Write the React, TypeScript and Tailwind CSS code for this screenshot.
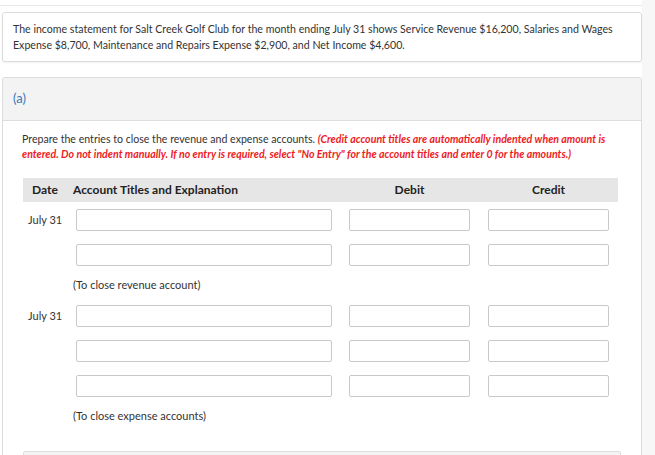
import React from "react";

const font = { fontFamily: "Lato, 'Open Sans', sans-serif" };

function Box({ w }: { w: string }) {
  return <div className={`${w} h-[22px] border border-[#c9c9c9] rounded-[2px] bg-white`} />;
}

function Row({ date }: { date?: string }) {
  return (
    <div className="flex items-center h-[22px] shrink-0">
      <div className="w-[53px] pl-[5px] text-[11px] text-[#333]">{date}</div>
      <Box w="w-[256px]" />
      <div className="w-[17px]" />
      <Box w="w-[121px]" />
      <div className="w-[18px]" />
      <Box w="w-[121px]" />
    </div>
  );
}

function Note({ text }: { text: string }) {
  return (
    <div className="flex items-center h-[39px]">
      <div className="w-[50px]" />
      <div className="text-[11px] text-[#333]">{text}</div>
    </div>
  );
}

export default function App() {
  return (
    <div className="w-[655px] h-[455px] overflow-hidden bg-[#f7f7f7] flex" style={font}>
      <div className="w-[642px] bg-white flex flex-col">
        <div className="h-[6px] shrink-0 border-b border-[#e8e8e8]" />
        <div className="shrink-0 mt-[6px] ml-[2px] w-[640px] border border-[#dcdcdc] rounded-[3px] shadow-[0_1px_2px_rgba(0,0,0,0.06)] px-[10px] pt-[8px] pb-[8px] text-[10.6px] leading-[16px] text-[#333]">
          The income statement for Salt Creek Golf Club for the month ending July 31 shows Service Revenue $16,200, Salaries and Wages Expense $8,700, Maintenance and Repairs Expense $2,900, and Net Income $4,600.
        </div>
        <div className="shrink-0 mt-[15px] ml-[2px] w-[640px] h-[400px] border border-[#dcdcdc] border-b-0 rounded-t-[3px]">
          <div className="h-[43px] bg-[#f3f3f3] border-b border-[#dedede] flex items-center pl-[10px] text-[13px] text-[#3b78b5]">
            (a)
          </div>
          <div className="pl-[19px] pt-[11px]">
            <div className="text-[10.6px] leading-[15px] text-[#333] pr-[26px]">
              Prepare the entries to close the revenue and expense accounts.{" "}
              <span className="text-[#ee1c25] font-bold italic">
                (Credit account titles are automatically indented when amount is entered. Do not indent manually. If no entry is required, select "No Entry" for the account titles and enter 0 for the amounts.)
              </span>
            </div>
            <div className="mt-[16px] ml-[1px] w-[595px] h-[24px] bg-[#e6e6e6] flex items-center text-[12px] font-bold text-[#222]">
              <div className="w-[50px] pl-[9px]">Date</div>
              <div className="w-[276px]">Account Titles and Explanation</div>
              <div className="w-[121px] text-center">Debit</div>
              <div className="w-[18px]" />
              <div className="w-[121px] text-center">Credit</div>
            </div>
            <div className="ml-[1px] mt-[7px] flex flex-col gap-[13px]">
              <Row date="July 31" />
              <Row />
            </div>
            <div className="ml-[1px]">
              <Note text="(To close revenue account)" />
            </div>
            <div className="ml-[1px] flex flex-col gap-[13px]">
              <Row date="July 31" />
              <Row />
              <Row />
            </div>
            <div className="ml-[1px]">
              <Note text="(To close expense accounts)" />
            </div>
            <div className="mt-[15px] ml-[1px] w-[598px] h-[20px] bg-[#f3f3f3] border border-[#dedede] rounded-[2px]" />
          </div>
        </div>
      </div>
    </div>
  );
}
